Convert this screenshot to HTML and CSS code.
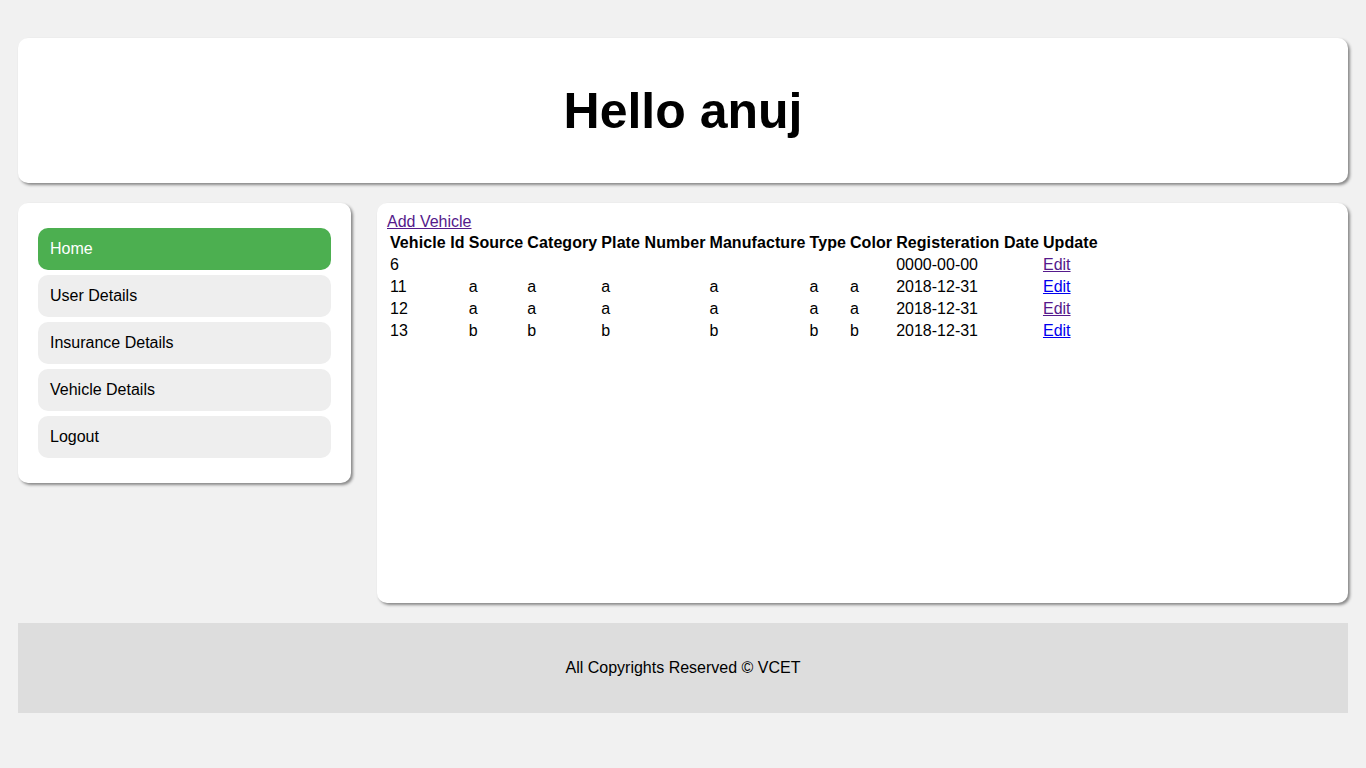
FILE: index.html
```html
<!DOCTYPE html>
<html>
<head>
<meta charset="utf-8">
<title>Home</title>
<link rel="stylesheet" href="styles.css">
</head>
<body>
<div class="page">
  <header class="card header">
    <h1>Hello anuj</h1>
  </header>
  <div class="row">
    <nav class="card sidebar">
      <a class="nav-item active" href="#">Home</a>
      <a class="nav-item" href="#">User Details</a>
      <a class="nav-item" href="#">Insurance Details</a>
      <a class="nav-item" href="#">Vehicle Details</a>
      <a class="nav-item" href="#">Logout</a>
    </nav>
    <main class="card content">
      <a class="link visited" href="#">Add Vehicle</a>
      <table class="vehicles">
        <tr>
          <th>Vehicle Id</th><th>Source</th><th>Category</th><th>Plate Number</th><th>Manufacture</th><th>Type</th><th>Color</th><th>Registeration Date</th><th>Update</th>
        </tr>
        <tr>
          <td>6</td><td></td><td></td><td></td><td></td><td></td><td></td><td>0000-00-00</td><td><a class="link visited" href="#">Edit</a></td>
        </tr>
        <tr>
          <td>11</td><td>a</td><td>a</td><td>a</td><td>a</td><td>a</td><td>a</td><td>2018-12-31</td><td><a class="link" href="#">Edit</a></td>
        </tr>
        <tr>
          <td>12</td><td>a</td><td>a</td><td>a</td><td>a</td><td>a</td><td>a</td><td>2018-12-31</td><td><a class="link visited" href="#">Edit</a></td>
        </tr>
        <tr>
          <td>13</td><td>b</td><td>b</td><td>b</td><td>b</td><td>b</td><td>b</td><td>2018-12-31</td><td><a class="link" href="#">Edit</a></td>
        </tr>
      </table>
    </main>
  </div>
  <footer class="footer">All Copyrights Reserved © VCET</footer>
</div>
</body>
</html>
```

FILE: styles.css
```css
html, body {
  margin: 0;
  padding: 0;
}
body {
  background: #f1f1f1;
  font-family: "Liberation Sans", Arial, sans-serif;
  font-size: 16px;
  color: #000;
}
.page {
  padding: 38px 18px 40px 18px;
  display: flex;
  flex-direction: column;
  gap: 20px;
}
.card {
  background: #fff;
  border-radius: 10px;
  box-shadow: 2px 2px 3px #888;
}
.header {
  height: 145px;
  display: flex;
  align-items: center;
  justify-content: center;
}
.header h1 {
  margin: 0;
  font-size: 50px;
  font-weight: bold;
  line-height: 1;
}
.row {
  display: grid;
  grid-template-columns: 333px 1fr;
  column-gap: 26px;
  align-items: start;
}
.sidebar {
  padding: 25px 20px;
  display: flex;
  flex-direction: column;
  gap: 5px;
}
.nav-item {
  display: block;
  height: 42px;
  line-height: 42px;
  padding-left: 12px;
  background: #eee;
  border-radius: 10px;
  color: #000;
  text-decoration: none;
}
.nav-item.active {
  background: #4caf50;
  color: #fff;
}
.content {
  height: 400px;
  box-sizing: border-box;
  padding: 10px;
}
.link {
  color: #0000ee;
  text-decoration: underline;
}
.link.visited {
  color: #551a8b;
}
.vehicles {
  border-collapse: separate;
  border-spacing: 2px;
}
.vehicles th,
.vehicles td {
  padding: 1px;
  text-align: left;
  font-size: 16px;
}
.vehicles th {
  font-weight: bold;
  letter-spacing: 0.08px;
}
.footer {
  background: #ddd;
  height: 90px;
  display: flex;
  align-items: center;
  justify-content: center;
}
```
